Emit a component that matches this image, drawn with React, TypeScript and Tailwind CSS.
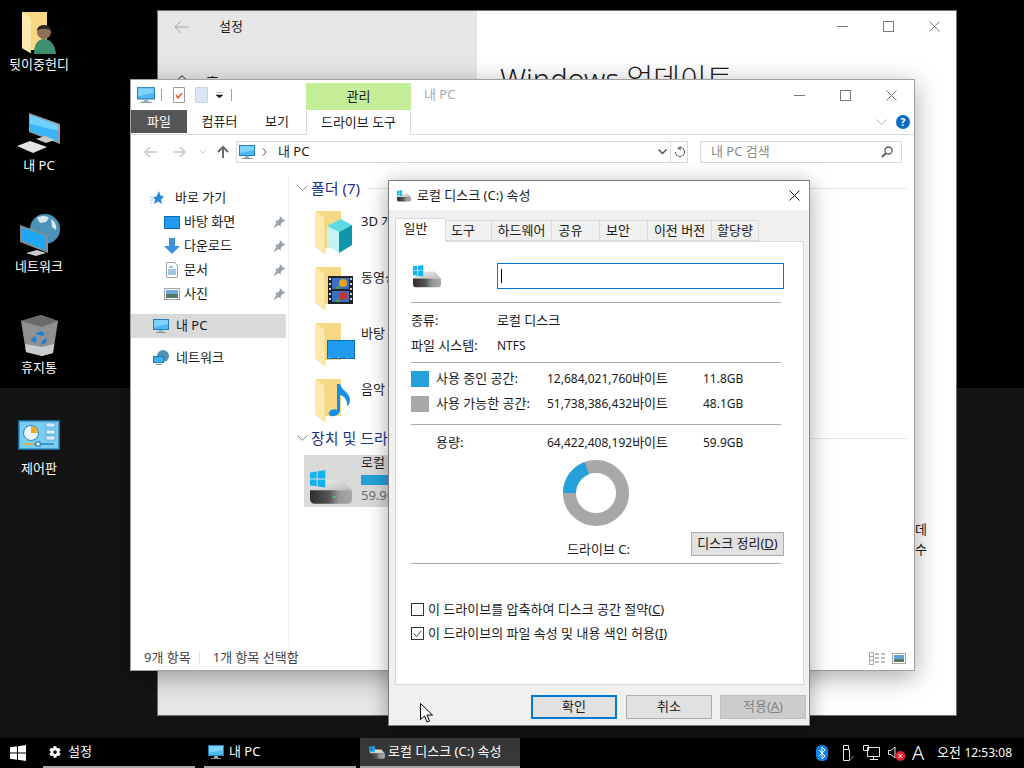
import { ReactNode } from "react";
import { FaCog } from "react-icons/fa";

const FolderBase = ({ children }: { children?: ReactNode }) => (
  <svg width="44" height="44" viewBox="0 0 44 44" className="shrink-0">
    <path d="M4 0h25v37H13v5L4 36z" fill="#f8d884" />
    <path d="M4 0l9 6v36.500L4 36z" fill="#fde9a9" stroke="#e8c468" strokeWidth="0.5" />
    {children}
  </svg>
);

const Cube = () => (
  <FolderBase>
    <path d="M15 15l14-7 11 6-13 7z" fill="#5fdbe6" />
    <path d="M15 15l12 6v21l-12-7z" fill="#c5f2f3" />
    <path d="M27 21l13-7v20l-13 8z" fill="#0f96ad" />
  </FolderBase>
);

const Film = () => (
  <FolderBase>
    <rect x="16" y="9" width="25" height="28" fill="#202428" />
    <rect x="20" y="11" width="17" height="11" fill="#3b6fc4" />
    <rect x="20" y="24" width="17" height="11" fill="#3b6fc4" />
    <circle cx="31" cy="16" r="4" fill="#e2a21c" />
    <circle cx="31" cy="29" r="4" fill="#c8372b" />
    <path d="M24 20l4-2v4h-4zM24 33l4-2v4h-4z" fill="#4f9a4a" />
    <path d="M17 11h2v2h-2zM17 16h2v2h-2zM17 21h2v2h-2zM17 26h2v2h-2zM17 31h2v2h-2zM38 11h2v2h-2zM38 16h2v2h-2zM38 21h2v2h-2zM38 26h2v2h-2zM38 31h2v2h-2z" fill="#d0d0d0" />
  </FolderBase>
);

const DesktopFolder = () => (
  <FolderBase>
    <rect x="15.500" y="17.500" width="27" height="18" fill="#1e9bf0" stroke="#0f6cae" />
    <path d="M17 34.500h24" stroke="#cfeaff" strokeDasharray="1 8" />
  </FolderBase>
);

const MusicFolder = () => (
  <FolderBase>
    <path d="M28 5v26c0 4-5 7-9 6-3-1-3-4 0-6 2-1 5-1 6 0V5z" fill="#0f8fe8" />
    <path d="M28 5c2 7 9 8 10 15 0 3-1 6-3 7 1-6-3-10-7-11z" fill="#0f8fe8" />
  </FolderBase>
);

const Monitor = ({ size = 16 }: { size?: number }) => (
  <svg width={size} height={size} viewBox="0 0 16 16" className="shrink-0">
    <rect x="0.500" y="1.500" width="15" height="10" fill="#4fb8f5" stroke="#1f7fb8" />
    <path d="M1 2h14v4L1 9z" fill="#7fd2fa" />
    <path d="M6 12h4v2H6z" fill="#9ab2c0" />
    <path d="M3 14.500h10" stroke="#7d8f9a" />
  </svg>
);

const WinLogo = ({ size, color }: { size: number; color: string }) => (
  <svg width={size} height={size} viewBox="0 0 16 16" className="shrink-0">
    <path d="M0 2.300l7-1v6.200H0zM8 1.200L16 0v7.500H8zM0 8.500h7v6.200l-7-1zM8 8.500h8V16l-8-1.200z" fill={color} />
  </svg>
);

const Drive = ({ w = 42, h = 35 }: { w?: number; h?: number }) => (
  <svg width={w} height={h} viewBox="0 0 44 36" className="shrink-0">
    <defs>
      <linearGradient id="driveFront" x1="0" x2="1" y1="0" y2="0">
        <stop offset="0" stopColor="#2e2e2e" />
        <stop offset="0.450" stopColor="#555555" />
        <stop offset="0.700" stopColor="#9a9a9a" />
        <stop offset="1" stopColor="#a8a8a8" />
      </linearGradient>
      <linearGradient id="driveTop" x1="0" x2="1" y1="0" y2="1">
        <stop offset="0" stopColor="#f2f2f2" />
        <stop offset="1" stopColor="#bcbcbc" />
      </linearGradient>
    </defs>
    <path d="M13 10h21l10 11H0z" fill="url(#driveTop)" />
    <path d="M0 21h44v9c0 3-2 5-5 5H5c-3 0-5-2-5-5z" fill="url(#driveFront)" />
    <rect x="24" y="27" width="3" height="2" fill="#3ed36a" />
    <path d="M0 2.200l7-1v7.300H0zM8 1.100L16 0v8.500H8zM0 9.500h7v7.300l-7-1zM8 9.500h8V18l-8-1.100z" fill="#12b2f0" />
  </svg>
);

const Caret = ({ className = "" }: { className?: string }) => (
  <svg width="11" height="7" viewBox="0 0 11 7" className={`shrink-0 ${className}`}>
    <path d="M0.500 0.500L5.500 5.500L10.500 0.500" fill="none" stroke="currentColor" />
  </svg>
);

const Pin = () => (
  <svg width="12" height="12" viewBox="0 0 12 12" className="shrink-0">
    <path d="M7 0l5 5-1 1-1-.5L8 8l-.5 2.500L5.500 9 1 12l-.5-.5L3.500 7 2 5l2.500-.5L7 2.500 6.500 1z" fill="#9aa3ab" />
  </svg>
);

const WindowButtons = ({ gap, color }: { gap: string; color: string }) => (
  <div className={`flex items-center ${gap}`} style={{ color }}>
    <svg width="11" height="11" viewBox="0 0 11 11"><path d="M0 5.500h11" stroke="currentColor" /></svg>
    <svg width="11" height="11" viewBox="0 0 11 11"><rect x="0.500" y="0.500" width="10" height="10" fill="none" stroke="currentColor" /></svg>
    <svg width="11" height="11" viewBox="0 0 11 11"><path d="M0.500 0.500l10 10M10.500 0.500l-10 10" stroke="currentColor" /></svg>
  </div>
);

const DesktopIcon = ({ label, children }: { label: string; children: ReactNode }) => (
  <div className="flex h-[101px] w-[78px] flex-col items-center">
    <div className="flex h-[50px] w-full items-center justify-center">{children}</div>
    <div className="-mt-[2px] text-[13px] leading-[16px] text-white">{label}</div>
  </div>
);

const NavRow = ({ icon, label, pin, indent, labelGap = "ml-[1px]" }: { icon: ReactNode; label: string; pin?: boolean; indent: string; labelGap?: string }) => (
  <div className={`flex h-[24px] items-center ${indent}`}>
    <div className="flex w-[22px] justify-center">{icon}</div>
    <span className={`${labelGap} text-[13px]`}>{label}</span>
    {pin && <div className="ml-auto mr-[3px]"><Pin /></div>}
  </div>
);

const GroupHeader = ({ label }: { label: string }) => (
  <div className="flex h-[24px] items-center pl-[8px] pr-[7px] text-[#1e3287]">
    <Caret className="text-[#8a8a8a]" />
    <span className="ml-[3px] whitespace-nowrap text-[15px]">{label}</span>
    <div className="ml-[8px] h-px flex-1 bg-[#e2e2e2]" />
  </div>
);

const FolderItem = ({ label, children }: { label: string; children: ReactNode }) => (
  <div className="flex h-[56px] items-start pl-[23px] pt-[9px]">
    {children}
    <span className="ml-[5px] mt-[1px] text-[13px]">{label}</span>
  </div>
);

const Sep = ({ mt, mb }: { mt: string; mb: string }) => <div className={`h-px bg-[#a8a8a8] ${mt} ${mb} mr-[22px]`} />;

const UsageRow = ({ color, label, bytes, size }: { color?: string; label: string; bytes: string; size: string }) => (
  <div className="grid h-[25px] grid-cols-[25px_111px_156px_1fr] items-center text-[12px]">
    <div className={`h-[16px] w-[18px] ${color ?? ""}`} />
    <span className="whitespace-nowrap text-[13px]">{label}</span>
    <span className="whitespace-nowrap">
      {bytes}
      <span className="text-[13px]">바이트</span>
    </span>
    <span className="whitespace-nowrap">{size}</span>
  </div>
);

const Tab = ({ label, w, active }: { label: string; w: string; active?: boolean }) => (
  <div
    className={`flex items-center justify-center border border-[#d9d9d9] text-[13px] ${w} ${
      active ? "relative z-10 -mb-px h-[24px] border-b-0 bg-white pb-[3px]" : "h-[21px] border-l-0 bg-[#f0f0f0]"
    }`}
  >
    {label}
  </div>
);

const DialogButton = ({ label, className }: { label: ReactNode; className: string }) => (
  <div className={`flex h-[24px] w-[86px] items-center justify-center text-[13px] ${className}`}>{label}</div>
);

export default function App() {
  return (
    <div className="relative h-[768px] w-[1024px] overflow-hidden bg-black font-['Noto_Sans','Noto_Sans_CJK_KR',sans-serif] text-[#1a1a1a]">
      {/* wallpaper */}
      <div className="h-[388px] bg-black" />
      <div className="h-[350px] bg-[#141414]" />

      {/* taskbar */}
      <div className="flex h-[30px] items-stretch bg-black text-[13px] text-white">
        <div className="flex w-[43px] items-center pl-[10px]">
          <WinLogo size={16} color="#ffffff" />
        </div>
        <div className="flex w-[152px] items-center border-b-2 border-[#a8a8a8] pl-[6px]">
          <FaCog size={12} color="#ffffff" className="shrink-0" />
          <span className="ml-[7px]">설정</span>
        </div>
        <div className="ml-[9px] flex w-[152px] items-center border-b-2 border-[#a8a8a8] pl-[4px]">
          <Monitor />
          <span className="ml-[5px]">내 PC</span>
        </div>
        <div className="ml-[4px] flex w-[160px] items-center border-b-2 border-[#a8a8a8] bg-[#383838] pl-[9px]">
          <Drive w={16} h={13} />
          <span className="ml-[3px] whitespace-nowrap">로컬 디스크 (C:) 속성</span>
        </div>
        <div className="ml-auto flex items-center pr-[12px]">
          <svg width="12" height="16" viewBox="0 0 12 16" className="shrink-0">
            <rect width="12" height="16" rx="5.500" fill="#0a84f0" />
            <path d="M3 5l6 6-3 3V2l3 3-6 6" fill="none" stroke="#ffffff" />
          </svg>
          <svg width="12" height="16" viewBox="0 0 12 16" className="ml-[14px] shrink-0">
            <path d="M1.500 0.500h5v4h1v11h-6z M1.500 4.500h5" fill="none" stroke="#e6e6e6" />
            <path d="M7 13l1.500 1.500L11.500 11" fill="none" stroke="#9a9a9a" />
          </svg>
          <svg width="17" height="16" viewBox="0 0 17 16" className="ml-[9px] shrink-0">
            <path d="M4.500 2.500h12v9h-12zM0.500 0.500h5v5h-5zM7 14.500h8M10.500 11.500v3" fill="#000000" stroke="#e6e6e6" />
          </svg>
          <svg width="18" height="16" viewBox="0 0 18 16" className="ml-[8px] shrink-0">
            <path d="M0.500 5.500h2.500l4-3.500v11l-4-3.500H0.500z" fill="none" stroke="#e6e6e6" />
            <circle cx="12.500" cy="11" r="5" fill="#e2242c" />
            <path d="M10.500 9l4 4M14.500 9l-4 4" stroke="#ffffff" />
          </svg>
          <span className="ml-[6px] text-[20px] font-light leading-none">A</span>
          <span className="ml-[13px] whitespace-nowrap">
            오전 <span className="text-[12px]">12:53:08</span>
          </span>
        </div>
      </div>

      {/* desktop icons */}
      <div className="absolute left-0 top-[8px] flex flex-col">
        <DesktopIcon label="뒷이중헌디">
          <svg width="44" height="44" viewBox="0 0 44 44">
            <path d="M5 1h25v38H13v3l-8-5z" fill="#f8d884" />
            <path d="M5 1l9 6v35l-9-5z" fill="#fde9a9" />
            <circle cx="27" cy="21" r="7" fill="#8f6f5a" />
            <path d="M20 20c0-8 14-8 14 0-3-3-11-3-14 0z" fill="#2f2a28" />
            <path d="M17 43c0-10 4-15 10-15s11 5 12 15z" fill="#3f8f6e" />
          </svg>
        </DesktopIcon>
        <DesktopIcon label="내 PC">
          <svg width="44" height="44" viewBox="0 0 44 44">
            <path d="M12 1l31 11v20L12 20z" fill="#9a9a9a" />
            <path d="M13 3l28 10v17L13 19z" fill="#39b4fb" />
            <path d="M13 3l28 10v6L13 12z" fill="#6fcffd" />
            <path d="M19 27l9-3 10 4-9 3z" fill="#c9c9c9" />
            <path d="M0 34l13-5 17 6-14 6z" fill="#e2e2e2" />
          </svg>
        </DesktopIcon>
        <DesktopIcon label="네트워크">
          <svg width="44" height="44" viewBox="0 0 44 44">
            <circle cx="28" cy="16" r="15" fill="#4d93b8" />
            <path d="M20 5c5-3 10-2 12 0l-3 4-6 1zM34 6c4 2 6 7 5 11l-4-3z" fill="#d7e8ef" />
            <path d="M3 12l28 10v18L3 29z" fill="#8c8c8c" />
            <path d="M4 14l25 9v15L4 27z" fill="#1ea8f5" />
            <path d="M9 40l11-3 9 3-10 3z" fill="#c9c9c9" />
          </svg>
        </DesktopIcon>
        <DesktopIcon label="휴지통">
          <svg width="40" height="44" viewBox="0 0 40 44">
            <path d="M2 7L22 1l17 6-5 32-11 3-16-4z" fill="#8f9294" />
            <path d="M2 7L22 1l17 6-16 6z" fill="#6a6a6a" />
            <path d="M6 30l17 3 12-3-1 9-11 3-16-4z" fill="#c9cbcd" />
            <path d="M16 20l6-3 4 3-3 2zM12 27l3-5 3 3-2 4zM21 31l6-2 1-5-4 2z" fill="#1f7fd1" />
          </svg>
        </DesktopIcon>
        <DesktopIcon label="제어판">
          <svg width="42" height="30" viewBox="0 0 42 30" className="-mt-[4px]">
            <rect width="42" height="30" fill="#146b9c" />
            <rect x="1.500" y="1.500" width="39" height="27" fill="#7ccdf2" />
            <circle cx="13" cy="13" r="7.500" fill="#eaf6fc" stroke="#2a86bd" />
            <path d="M13 13V6a7 7 0 0 1 7 7z" fill="#f0a81e" />
            <path d="M28 3h9v4h-9zM28 10h9v4h-9zM28 16h9v4h-9z" fill="#d6f0fb" stroke="#2a86bd" strokeWidth="0.500" />
            <path d="M6 24h10" stroke="#f0a81e" strokeWidth="1.500" />
            <path d="M16 24h20" stroke="#2a86bd" strokeWidth="1.500" />
            <rect x="18" y="22" width="4" height="4" fill="#ffffff" stroke="#1f6fa8" />
          </svg>
        </DesktopIcon>
      </div>

      {/* settings window */}
      <div className="absolute left-[157px] top-[10px] flex h-[706px] w-[800px] border border-[#6e6e6e] bg-white">
        <div className="w-[319px] bg-[#e6e6e6]">
          <div className="flex h-[32px] items-center pl-[16px]">
            <svg width="16" height="14" viewBox="0 0 16 14" className="text-[#a8a8a8]">
              <path d="M7 1L1 7l6 6M1 7h14" fill="none" stroke="currentColor" />
            </svg>
            <span className="ml-[29px] text-[13px]">설정</span>
          </div>
          <div className="mt-[29px] flex h-[20px] items-center pl-[17px] text-[14px]">
            <svg width="14" height="14" viewBox="0 0 14 14" className="shrink-0">
              <path d="M0.500 7L7 0.700 13.500 7M2.500 6v7.500h9V6" fill="none" stroke="#1a1a1a" />
            </svg>
            <span className="ml-[17px]">홈</span>
          </div>
        </div>
        <div className="flex-1">
          <div className="flex h-[32px] items-start justify-end pr-[16px] pt-[10px]">
            <WindowButtons gap="gap-[35px]" color="#7a7a7a" />
          </div>
          <div className="ml-[23px] mt-[16px] whitespace-nowrap text-[29px] font-light leading-[40px]">Windows 업데이트</div>
          <div className="ml-[438px] mt-[420px] text-[13px] leading-[20px]">
            <div>데</div>
            <div>수</div>
          </div>
        </div>
      </div>

      {/* explorer window */}
      <div className="absolute left-[130px] top-[79px] flex h-[592px] w-[785px] flex-col border border-[#a0a0a0] bg-white shadow-[0_6px_24px_rgba(0,0,0,0.35)]">
        <div className="flex h-[30px] items-stretch">
          <div className="flex w-[175px] items-center pl-[6px]">
            <Monitor size={18} />
            <div className="ml-[6px] h-[12px] w-px bg-[#a0a0a0]" />
            <svg width="12" height="16" viewBox="0 0 12 16" className="ml-[11px] shrink-0">
              <path d="M0.500 0.500h11v15H0.500z" fill="#ffffff" stroke="#9a9a9a" />
              <path d="M3 8l2 3 4-5" fill="none" stroke="#e8582a" strokeWidth="1.500" />
            </svg>
            <svg width="13" height="16" viewBox="0 0 13 16" className="ml-[10px] shrink-0">
              <path d="M0.500 0.500h12v15H0.500z" fill="#dbe6f4" stroke="#c8d4e4" />
            </svg>
            <svg width="7" height="6" viewBox="0 0 7 6" className="ml-[8px] shrink-0">
              <path d="M0 0h7M0 3h7L3.500 6z" fill="#1a1a1a" stroke="#1a1a1a" strokeWidth="0.500" />
            </svg>
            <div className="ml-[8px] h-[12px] w-px bg-[#a0a0a0]" />
          </div>
          <div className="mt-[3px] flex w-[105px] items-center justify-center bg-[#c4ee98] text-[13px]">관리</div>
          <span className="ml-[13px] self-center text-[13px] text-[#a8a8a8]">내 PC</span>
          <div className="ml-auto flex items-center pr-[17px]">
            <WindowButtons gap="gap-[35px]" color="#7a7a7a" />
          </div>
        </div>
        <div className="flex h-[25px] items-stretch border-b border-[#dadada] text-[13px]">
          <div className="mb-[1px] flex w-[56px] items-center justify-center bg-[#555555] text-white">파일</div>
          <div className="flex w-[65px] items-center justify-center">컴퓨터</div>
          <div className="mr-[4px] flex w-[50px] items-center justify-center">보기</div>
          <div className="-mb-px flex w-[105px] items-center justify-center border-x border-[#dadada] bg-white">드라이브 도구</div>
          <div className="ml-auto flex items-center pr-[4px]">
            <Caret className="mr-[9px] text-[#b0b0b0]" />
            <div className="flex h-[14px] w-[14px] items-center justify-center rounded-full bg-[#0a6bc4] text-[10px] font-bold text-white">?</div>
          </div>
        </div>
        <div className="flex h-[41px] items-center pb-[7px] pl-[12px]">
          <svg width="86" height="14" viewBox="0 0 86 14" className="shrink-0 text-[#c8c8c8]">
            <path d="M14 7H2M7 2L2 7l5 5M30 7h12M37 2l5 5-5 5" fill="none" stroke="currentColor" strokeWidth="1.500" />
            <path d="M57 5l3 3 3-3" fill="none" stroke="currentColor" />
            <path d="M80 13V2M75 7l5-5 5 5" fill="none" stroke="#6a6a6a" strokeWidth="2" />
          </svg>
          <div className="ml-[7px] flex h-[22px] w-[452px] items-center border border-[#d9d9d9] pl-[2px]">
            <Monitor />
            <svg width="5" height="8" viewBox="0 0 5 8" className="ml-[7px] shrink-0">
              <path d="M1 0.500L4 4 1 7.500" fill="none" stroke="#555555" />
            </svg>
            <span className="ml-[11px] text-[13px]">내 PC</span>
            <svg width="9" height="6" viewBox="0 0 9 6" className="ml-auto mr-[3px] shrink-0">
              <path d="M0.500 0.500l4 4 4-4" fill="none" stroke="#555555" strokeWidth="1.500" />
            </svg>
            <div className="flex h-full w-[17px] items-center justify-center border-l border-[#d9d9d9]">
              <svg width="11" height="12" viewBox="0 0 11 12">
                <path d="M6 1.500A4.500 4.500 0 1 1 1.500 6M6 0v3.500L3.500 1.500" fill="none" stroke="#666666" strokeWidth="1.200" />
              </svg>
            </div>
          </div>
          <div className="ml-[12px] flex h-[22px] w-[202px] items-center border border-[#d9d9d9] pl-[10px] pr-[8px] text-[13px] text-[#8a8a8a]">
            <span>내 PC 검색</span>
            <svg width="12" height="12" viewBox="0 0 12 12" className="ml-auto">
              <circle cx="7.500" cy="4.500" r="3.500" fill="none" stroke="#5a5a5a" strokeWidth="1.300" />
              <path d="M5 7l-4 4" stroke="#5a5a5a" strokeWidth="1.800" />
            </svg>
          </div>
        </div>
        <div className="flex min-h-0 flex-1">
          <div className="w-[158px] border-r border-[#f0f0f0] pt-[10px]">
            <NavRow
              indent="pl-[15px]"
              labelGap="ml-[7px]"
              label="바로 가기"
              icon={
                <svg width="14" height="14" viewBox="0 0 14 14">
                  <path d="M9 0l1.500 4.500L14 5.500 11 8.500 12 13 8 10.500 4 13l1-4.500L3 6.500l3.500-1z" fill="#2a86d8" />
                  <path d="M0 6h3M0 9h3M0 12h3" stroke="#9cc4e8" />
                </svg>
              }
            />
            <NavRow
              pin
              indent="pl-[30px]"
              label="바탕 화면"
              icon={
                <svg width="16" height="13" viewBox="0 0 16 13">
                  <rect x="0.500" y="0.500" width="15" height="12" fill="#1e9bf0" stroke="#0f6cae" />
                </svg>
              }
            />
            <NavRow
              pin
              indent="pl-[30px]"
              label="다운로드"
              icon={
                <svg width="16" height="16" viewBox="0 0 16 16">
                  <path d="M5 0h6v8h5l-8 8-8-8h5z" fill="#3b8fdc" />
                </svg>
              }
            />
            <NavRow
              pin
              indent="pl-[30px]"
              label="문서"
              icon={
                <svg width="12" height="16" viewBox="0 0 12 16">
                  <path d="M0.500 0.500h8l3 3v12h-11z" fill="#ffffff" stroke="#a0a0a0" />
                  <path d="M3 5h4M2 8h8M2 10h8M2 12h8" stroke="#3f8fc8" />
                </svg>
              }
            />
            <NavRow
              pin
              indent="pl-[30px]"
              label="사진"
              icon={
                <svg width="16" height="12" viewBox="0 0 16 12">
                  <rect x="0.500" y="0.500" width="15" height="11" fill="#ffffff" stroke="#a0a0a0" />
                  <rect x="2" y="2" width="12" height="4" fill="#6fa8d8" />
                  <rect x="2" y="6" width="12" height="4" fill="#4f7a5c" />
                </svg>
              }
            />
            <div className="mt-[8px] flex h-[24px] w-[155px] items-center bg-[#d9d9d9] pl-[22px] text-[13px]">
              <Monitor />
              <span className="ml-[7px]">내 PC</span>
            </div>
            <div className="mt-[8px] flex h-[24px] items-center pl-[22px] text-[13px]">
              <svg width="16" height="16" viewBox="0 0 16 16" className="shrink-0">
                <circle cx="10" cy="6" r="6" fill="#4d93b8" />
                <rect x="0.500" y="6.500" width="10" height="6" fill="#3fb0f0" stroke="#1f7fb8" />
                <path d="M3 14.500h6" stroke="#7d8f9a" />
              </svg>
              <span className="ml-[7px]">네트워크</span>
            </div>
          </div>
          <div className="min-w-0 flex-1">
            <GroupHeader label="폴더 (7)" />
            <div className="pt-[2px]">
              <FolderItem label="3D 개체"><Cube /></FolderItem>
              <FolderItem label="동영상"><Film /></FolderItem>
              <FolderItem label="바탕 화면"><DesktopFolder /></FolderItem>
              <FolderItem label="음악"><MusicFolder /></FolderItem>
            </div>
            <GroupHeader label="장치 및 드라이브 (1)" />
            <div className="ml-[15px] mt-[5px] flex h-[52px] w-[250px] items-start bg-[#d9d9d9] pl-[6px]">
              <div className="mt-[15px]"><Drive /></div>
              <div className="ml-[9px] flex-1 pr-[4px] text-[13px]">
                <div className="leading-[14px]">로컬 디스크 (C:)</div>
                <div className="mt-[6px] h-[10px] bg-[#f0f0f0]"><div className="h-full w-1/4 bg-[#26a0da]" /></div>
                <div className="mt-[2px] whitespace-nowrap leading-[16px] text-[#6d6d6d]">59.9GB 중 48.1GB 사용 가능</div>
              </div>
            </div>
          </div>
        </div>
        <div className="flex h-[24px] items-center pl-[13px] pr-[8px] text-[13px] text-[#444444]">
          <span>9개 항목</span>
          <div className="ml-[8px] h-[14px] w-px bg-[#e6e6e6]" />
          <span className="ml-[13px]">1개 항목 선택함</span>
          <div className="ml-auto flex items-center">
            <svg width="16" height="13" viewBox="0 0 16 13">
              <path d="M0.500 0.500h4v12h-4zM0.500 4.500h4M0.500 8.500h4" fill="none" stroke="#a8a8a8" />
              <path d="M6 2h4M12 2h4M6 6h4M12 6h4M6 10h4M12 10h4" stroke="#7a7a7a" />
            </svg>
            <svg width="14" height="11" viewBox="0 0 14 11" className="ml-[7px]">
              <rect x="0.500" y="0.500" width="13" height="10" fill="#ffffff" stroke="#a8a8a8" />
              <rect x="2" y="2" width="10" height="4" fill="#5aa4e0" />
              <rect x="2" y="6" width="10" height="3" fill="#5a7a5c" />
            </svg>
          </div>
        </div>
      </div>

      {/* properties dialog */}
      <div className="absolute left-[388px] top-[180px] flex h-[546px] w-[422px] flex-col border border-[#7a7a7a] border-r-[#8a8a8a] bg-[#f0f0f0] shadow-[0_4px_20px_rgba(0,0,0,0.35)]">
        <div className="flex h-[29px] items-center bg-white pl-[8px] pr-[9px]">
          <Drive w={14} h={12} />
          <span className="ml-[6px] text-[13px]">로컬 디스크 (C:) 속성</span>
          <svg width="11" height="11" viewBox="0 0 11 11" className="ml-auto text-[#1a1a1a]">
            <path d="M0.500 0.500l10 10M10.500 0.500l-10 10" stroke="currentColor" />
          </svg>
        </div>
        <div className="flex items-end pl-[6px] pt-[8px]">
          <Tab label="일반" w="w-[51px] pr-[10px]" active />
          <Tab label="도구" w="w-[46px] pr-[11px]" />
          <Tab label="하드웨어" w="w-[60px]" />
          <Tab label="공유" w="w-[48px] pr-[10px]" />
          <Tab label="보안" w="w-[48px] pr-[11px]" />
          <Tab label="이전 버전" w="w-[64px]" />
          <Tab label="할당량" w="w-[47px]" />
        </div>
        <div className="ml-[6px] h-[444px] w-[409px] border border-[#d9d9d9] bg-white pl-[15px]">
          <div className="flex items-center pt-[21px]">
            <div className="flex w-[31px] justify-center"><Drive w={28} h={23} /></div>
            <div className="ml-[55px] flex h-[26px] w-[287px] items-center border border-[#0078d7] pl-[3px]">
              <div className="h-[14px] w-px bg-black" />
            </div>
          </div>
          <Sep mt="mt-[13px]" mb="mb-[5px]" />
          <div className="grid grid-cols-[86px_1fr] text-[13px] leading-[25px]">
            <span>종류:</span>
            <span>로컬 디스크</span>
            <span>파일 시스템:</span>
            <span className="text-[12px]">NTFS</span>
          </div>
          <Sep mt="mt-[4px]" mb="mb-[3px]" />
          <UsageRow color="bg-[#26a0da]" label="사용 중인 공간:" bytes="12,684,021,760" size="11.8GB" />
          <UsageRow color="bg-[#a8a8a8]" label="사용 가능한 공간:" bytes="51,738,386,432" size="48.1GB" />
          <Sep mt="mt-[8px]" mb="mb-[5px]" />
          <UsageRow label="용량:" bytes="64,422,408,192" size="59.9GB" />
          <div className="ml-[152px] mt-[5px] h-[66px]">
            <svg width="66" height="66" viewBox="0 0 66 66">
              <circle cx="33" cy="33" r="26.500" fill="none" stroke="#a8a8a8" strokeWidth="13" />
              <path d="M0 33A33 33 0 0 1 21.600 2L26.100 14.200A20 20 0 0 0 13 33z" fill="#26a0da" />
            </svg>
          </div>
          <div className="mt-[6px] flex h-[24px] items-start">
            <span className="ml-[156px] mt-[9px] text-[13px] leading-[16px]">드라이브 C:</span>
            <div className="ml-auto mr-[19px] flex h-[24px] w-[93px] items-center justify-center border border-[#adadad] bg-[#e1e1e1] text-[13px]">
              디스크 정리(<u>D</u>)
            </div>
          </div>
          <Sep mt="mt-[7px]" mb="mb-[39px]" />
          <div className="flex h-[13px] items-center text-[13px]">
            <div className="h-[13px] w-[13px] border border-[#333333] bg-white" />
            <span className="ml-[4px]">이 드라이브를 압축하여 디스크 공간 절약(<u>C</u>)</span>
          </div>
          <div className="mt-[11px] flex h-[13px] items-center text-[13px]">
            <svg width="13" height="13" viewBox="0 0 13 13" className="shrink-0">
              <rect x="0.500" y="0.500" width="12" height="12" fill="#ffffff" stroke="#333333" />
              <path d="M2.500 6.500l3 3 5-6" fill="none" stroke="#444444" />
            </svg>
            <span className="ml-[4px]">이 드라이브의 파일 속성 및 내용 색인 허용(<u>I</u>)</span>
          </div>
        </div>
        <div className="flex justify-end gap-[8px] pr-[3px] pt-[10px]">
          <DialogButton label="확인" className="mr-[1px] border-2 border-[#0078d7] bg-[#e1e1e1]" />
          <DialogButton label="취소" className="border border-[#adadad] bg-[#e1e1e1]" />
          <DialogButton label={<>적용(<u>A</u>)</>} className="border border-[#bfbfbf] bg-[#cccccc] text-[#838383]" />
        </div>
      </div>

      {/* mouse pointer */}
      <svg width="13" height="20" viewBox="0 0 13 20" className="absolute left-[420px] top-[703px]">
        <path d="M0.500 0.500v16l4-3.500 2.500 6 2.500-1-2.500-6h5.500z" fill="#ffffff" stroke="#000000" />
      </svg>
    </div>
  );
}
